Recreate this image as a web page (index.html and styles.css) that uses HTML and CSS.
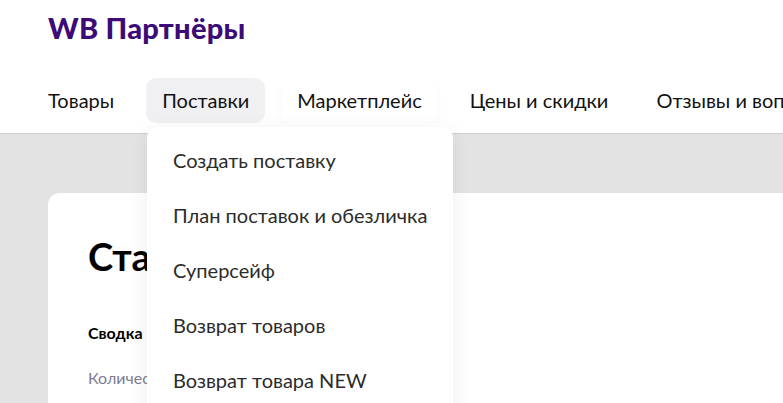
FILE: index.html
```html
<!DOCTYPE html>
<html lang="ru">
<head>
<meta charset="utf-8">
<title>WB Партнёры</title>
<link rel="stylesheet" href="styles.css">
</head>
<body>
<header class="header">
  <div class="logo">WB Партнёры</div>
  <nav class="nav">
    <a class="nav-item">Товары</a>
    <a class="nav-item active">Поставки</a>
    <a class="nav-item hover">Маркетплейс</a>
    <a class="nav-item">Цены и скидки</a>
    <a class="nav-item">Отзывы и вопросы</a>
  </nav>
</header>
<main class="main">
  <section class="card">
    <h1 class="title">Статистика</h1>
    <div class="subtitle">Сводка</div>
    <div class="muted">Количество</div>
  </section>
</main>
<div class="dropdown">
  <div class="menu-item">Создать поставку</div>
  <div class="menu-item">План поставок и обезличка</div>
  <div class="menu-item">Суперсейф</div>
  <div class="menu-item">Возврат товаров</div>
  <div class="menu-item">Возврат товара NEW</div>
</div>
</body>
</html>
```
FILE: styles.css
```css
* { box-sizing: border-box; }
html, body { margin: 0; padding: 0; }
body {
  width: 783px;
  height: 403px;
  overflow: hidden;
  font-family: Lato, "Noto Sans", sans-serif;
  background: #e3e3e3;
  position: relative;
  color: #000;
}
.header {
  background: #fff;
  border-bottom: 1px solid #cfcfcf;
  padding: 11px 0 0 48px;
  height: 134px;
}
.logo {
  font-size: 29px;
  font-weight: 900;
  color: #3c0b78;
  line-height: 34px;
  letter-spacing: 0.25px;
}
.nav {
  display: flex;
  gap: 16px;
  margin-top: 33px;
  margin-left: -16px;
  white-space: nowrap;
  overflow: hidden;
}
.nav-item {
  font-size: 20px;
  line-height: 45px;
  height: 45px;
  padding: 0 16px;
  border-radius: 10px;
  color: #111;
}
.nav-item.active { background: #f0f0f3; }
.nav-item.hover { box-shadow: 0 3px 6px rgba(0,0,0,0.03); }
.main { padding: 59px 0 0 48px; }
.card {
  background: #fff;
  border-radius: 12px 0 0 12px;
  padding: 40px 40px;
  width: 760px;
  height: 260px;
}
.title {
  margin: 0;
  font-size: 38px;
  font-weight: 700;
  line-height: 46px;
}
.subtitle {
  margin-top: 44px;
  font-size: 16px;
  font-weight: 700;
  line-height: 20px;
}
.muted {
  margin-top: 25px;
  font-size: 16px;
  line-height: 20px;
  color: #7d7d90;
}
.dropdown {
  position: absolute;
  left: 147px;
  top: 127px;
  width: 306px;
  height: 320px;
  background: #fff;
  border-radius: 10px;
  box-shadow: 0 4px 20px rgba(0,0,0,0.07);
  padding: 6px 0 0 26px;
}
.menu-item {
  font-size: 20px;
  line-height: 55px;
  height: 55px;
  color: #2b2b2b;
  white-space: nowrap;
}
```
